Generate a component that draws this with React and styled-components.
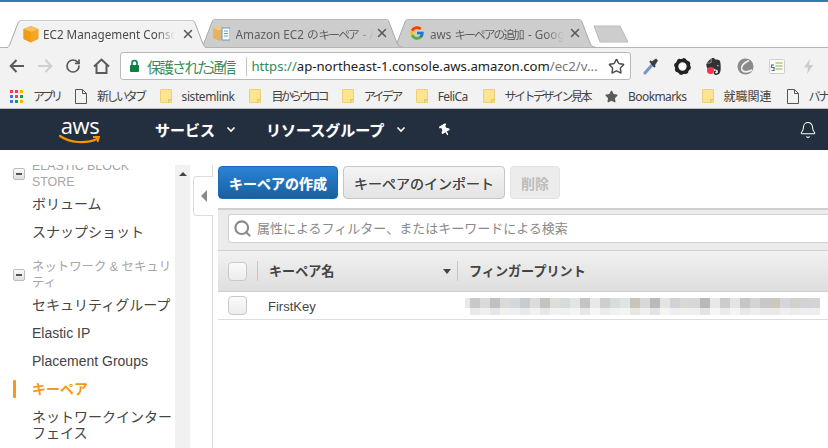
import React from 'react';
import styled, { createGlobalStyle } from 'styled-components';
import { Star, RotateCw, Search, Bell, X } from 'lucide-react';
import { FaThumbtack, FaStar } from 'react-icons/fa';
import { FcGoogle } from 'react-icons/fc';
import { SiEvernote } from 'react-icons/si';

const UI = '"Noto Sans", "Noto Sans CJK JP", sans-serif';
const CONSOLE = '"Liberation Sans", "Noto Sans CJK JP", sans-serif';

const Global = createGlobalStyle`
  html, body { margin: 0; padding: 0; background: #fff; }
  * { box-sizing: border-box; }
`;
const Page = styled.div`
  width: 828px; height: 448px; overflow: hidden; display: flex; flex-direction: column;
  font-family: ${UI}; background: #fff;
`;
const TabStrip = styled.div`
  height: 48px; flex: none; display: flex; align-items: flex-end; padding-left: 5px;
  border-top: 2px solid #2b7bb5; border-bottom: 1px solid #b4b4b4; background: #fff;
`;
const Tab = styled.div`
  position: relative; width: 203px; height: 28px; margin-left: -9.5px; margin-bottom: ${p => (p.$active ? '-1px' : '0')};
  flex: none; display: flex; align-items: center; z-index: ${p => p.$z};
  padding-left: ${p => p.$pad}px; font-size: 11.7px; white-space: nowrap;
  color: ${p => (p.$active ? '#4a4a4a' : '#5e5e5e')};
  &:first-child { margin-left: 0; }
`;
const TabShape = styled.svg`
  position: absolute; left: 0; top: 0; width: 100%; height: 100%; z-index: -1;
`;
const TabIcon = styled.svg` width: 18px; height: 18px; flex: none; `;
const FavWrap = styled.span` width: 16px; height: 16px; flex: none; display: flex; `;
const TabTitle = styled.span`
  position: relative; display: block; overflow: hidden; width: ${p => p.$w}px; margin-left: ${p => p.$gap}px;
  -webkit-mask-image: linear-gradient(to right, #000 86%, transparent 100%);
  mask-image: linear-gradient(to right, #000 86%, transparent 100%);
`;
const Kana = styled.span` letter-spacing: -1.9px; margin-right: 2px; `;
const TabClose = styled.span`
  position: absolute; left: 176px; top: 7px; width: 14px; height: 14px; color: #5a5a5a; display: flex;
`;
const NewTab = styled.svg` width: 36px; height: 18px; margin: 0 0 4px -2px; flex: none; `;

const Toolbar = styled.div`
  height: 36px; flex: none; background: #f2f2f2; display: flex; align-items: center; padding-left: 3px;
`;
const ToolBtn = styled.span`
  width: 28px; height: 28px; flex: none; display: flex; align-items: center; justify-content: center;
  color: ${p => p.$c || '#5a5a5a'};
`;
const Address = styled.div`
  width: 511px; height: 28px; margin: 0 4px 0 5px; flex: none; background: #fff; border: 1px solid #b9b9b9;
  border-radius: 3px; display: flex; align-items: center; padding-left: 8px; font-size: 14.5px; white-space: nowrap;
`;
const LockIcon = styled.svg` width: 11px; height: 14px; flex: none; `;
const Secure = styled.span` color: #3f8a5c; margin-left: 7px; letter-spacing: -2px; `;
const AddrSep = styled.span` width: 1px; height: 19px; background: #c4c4c4; margin: 0 5px 0 11px; flex: none; `;
const Scheme = styled.span` color: #2f8a5c; `;
const Host = styled.span` color: #222; `;
const Path = styled.span` color: #777; `;
const AddrUrl = styled.span` font-size: 13.15px; `;
const AddrStar = styled.span` margin-left: auto; margin-right: 4px; width: 18px; flex: none; display: flex; color: #4a4a4a; `;
const ExtIcon = styled.span`
  position: relative; width: 31.6px; height: 24px; flex: none; display: flex; align-items: center; justify-content: center;
`;
const RedDot = styled.span`
  position: absolute; left: 9px; top: 13px; width: 7px; height: 7px; border-radius: 50%; background: #ee3b4a;
`;

const Bookmarks = styled.div`
  height: 25px; flex: none; background: #f2f2f2; border-bottom: 1px solid #bcbcbc; display: flex; align-items: center;
  padding-left: 10px; font-size: 12px; color: #444; white-space: nowrap; overflow: hidden; gap: 15px;
`;
const Mark = styled.span` display: flex; align-items: center; gap: 10px; flex: none; `;
const MarkLabel = styled.span` letter-spacing: ${p => p.$ls || 0}px; `;

const Nav = styled.div`
  height: 41px; flex: none; background: #232f3e; display: flex; align-items: center; color: #fff; position: relative;
  font-family: ${CONSOLE};
`;
const Logo = styled.div`
  position: relative; width: 42px; height: 32px; margin-left: 59px; flex: none;
  display: flex; justify-content: center;
`;
const LogoWord = styled.span`
  font-family: "Open Sans", sans-serif; font-size: 22px; line-height: 22px; color: #fff; letter-spacing: -0.5px;
`;
const Smile = styled.svg` position: absolute; left: 0; bottom: 1px; width: 42px; height: 11px; `;
const NavMenu = styled.span`
  font-size: 15px; font-weight: 700; display: flex; align-items: center; margin-left: ${p => p.$ml}px; flex: none;
  text-shadow: 0 0 1px rgba(255,255,255,.4);
`;
const Chevron = styled.svg` width: 10px; height: 7px; margin-left: ${p => p.$ml}px; `;
const PinWrap = styled.span` margin-left: 33px; display: flex; transform: rotate(-30deg); `;
const BellWrap = styled.span` margin-left: auto; margin-right: 11px; display: flex; `;

const Main = styled.div` flex: 1; min-height: 0; display: flex; font-family: ${CONSOLE}; `;
const SideColumn = styled.div` width: 190px; flex: none; padding-top: 15px; display: flex; `;
const SideScroll = styled.div` flex: 1; min-width: 0; overflow: hidden; `;
const SideInner = styled.div` margin-top: -7px; width: 175px; `;
const Group = styled.div`
  display: flex; align-items: center; gap: 7px; padding-left: 13px; margin-top: ${p => p.$mt || 0}px;
  font-size: 12.4px; line-height: 16px; color: #a6a6a6; white-space: nowrap;
`;
const GroupLabel = styled.span` display: block; `;
const Toggle = styled.span`
  width: 12px; height: 12px; flex: none; border: 1px solid #bdbdbd; border-radius: 2px; background: linear-gradient(#fafafa,#dedede);
  display: flex; align-items: center; justify-content: center;
  &::before { content: ''; width: 6px; height: 2px; background: #555; }
`;
const Item = styled.div`
  position: relative; padding: 6px 0 6px 32px; font-size: 14px; line-height: 16px; white-space: nowrap;
  overflow: hidden; color: ${p => (p.$active ? '#f7981d' : '#444')}; font-weight: ${p => (p.$active ? 700 : 400)};
`;
const ActiveBar = styled.span`
  position: absolute; left: 13px; top: 5px; width: 3px; height: 18px; background: #f7981d; border-radius: 1px;
`;
const Scrollbar = styled.div`
  width: 15px; flex: none; background: #f1f1f1; display: flex; justify-content: center; padding-top: 7px;
  &::before { content: ''; width: 0; height: 0; border: 4px solid transparent; border-top: 0; border-bottom: 4px solid #444; }
`;
const Rail = styled.div`
  width: 23px; flex: none; margin-top: 15px; border-right: 1px solid #ddd; padding: 11px 0 0 3px;
`;
const RailHandle = styled.div`
  width: 20px; height: 40px; margin-right: -1px; background: #fff; border: 1px solid #ddd; border-right: 0;
  border-radius: 4px 0 0 4px; display: flex; align-items: center; justify-content: center;
  &::before { content: ''; width: 0; height: 0; border: 6px solid transparent; border-left: 0; border-right: 6px solid #8a8a8a; }
`;
const Content = styled.div` flex: 1; min-width: 0; padding: 16px 0 0 5px; overflow: hidden; `;
const Actions = styled.div` display: flex; gap: 5px; height: 33px; `;
const Button = styled.button`
  height: 33px; width: ${p => p.$w}px; padding: 0; font: 700 14px ${CONSOLE}; border-radius: 4px; cursor: pointer; flex: none;
  ${p => p.$primary && `color:#fff;background:linear-gradient(#2b83d6,#17609f);border:1px solid #1d6ab0;text-shadow:0 0 1px rgba(255,255,255,.5);`}
  ${p => p.$plain && `color:#444;background:linear-gradient(#f4f4f4,#e4e4e4);border:1px solid #c6c6c6;font-weight:400;text-shadow:0 0 .6px #444;`}
  ${p => p.$off && `color:#bdbdbd;background:#ececec;border:1px solid #e2e2e2;`}
`;
const FilterBand = styled.div`
  margin-top: 9px; height: 42px; background: #ebebeb; border-top: 2px solid #cfcfcf; padding: 4px 0 7px 10px;
`;
const FilterBox = styled.div`
  height: 29px; background: #fff; border: 1px solid #d2d2d2; border-right: 0; border-radius: 3px 0 0 3px;
  display: flex; align-items: center; padding-left: 4px; gap: 5px; font-size: 13px; color: #8a8a8a; white-space: nowrap;
`;
const FilterText = styled.span` margin-bottom: 2px; `;
const HeadRow = styled.div`
  height: 42px; display: flex; align-items: center; border-top: 1px solid #cfcfcf; border-bottom: 1px solid #cfcfcf;
  background: linear-gradient(#f1f1f1,#dedede); padding-left: 10px; font-size: 13.1px; font-weight: 700; color: #444;
`;
const HeadLabel = styled.span` margin-bottom: 2px; `;
const Check = styled.span`
  width: 19px; height: 19px; flex: none; background: linear-gradient(#fbfbfb,#ececec); border: 1px solid #c9c9c9; border-radius: 4px;
`;
const ColSep = styled.span` width: 1px; height: 20px; background: #c6c6c6; flex: none; margin: ${p => p.$m}; `;
const KeyHead = styled.span` width: 187px; flex: none; display: flex; align-items: center; justify-content: space-between; padding-right: 5px; `;
const SortCaret = styled.span`
  width: 0; height: 0; border: 4px solid transparent; border-bottom: 0; border-top: 5px solid #444;
`;
const DataRow = styled.div`
  height: 28px; display: flex; align-items: center; border-bottom: 1px solid #ddd; padding-left: 10px;
  font-size: 13px; color: #444;
`;
const KeyName = styled.span` width: 197px; margin-left: 21px; flex: none; padding-top: 1px; `;
const Mosaic = styled.svg` width: 360px; height: 22px; flex: none; filter: blur(.5px); `;

const mosaic = ['#c8c8c8','#dadada','#c0c0c0','#dcdad6','#d4d8da','#c8ccce','#dcdcdc','#c0c4c2','#e0dcd8','#d4dcda','#e4e4e4','#c4c4c6','#e8e8e8','#ccced0','#d8dcde','#e0e4e2','#c8c4bc','#d8d8da','#b8babc','#e4e4e0','#d0d4d8','#d8d8d6','#d4d8da','#b8b8b8','#e8e8e8','#cccccc','#e4e4e4','#c4c6c8','#d4d4d4','#c8c8cc','#ccc8c0','#d4d6dc','#d0d0cc','#d0d4d4','#d4d4d8'];

const TabBg = ({ active }) => (
  <TabShape viewBox="0 0 203 28" preserveAspectRatio="none">
    <path d="M0 28 C3 28 4 26 5 24 L13 3 C14 1 15 0 17 0 L186 0 C188 0 189 1 190 3 L198 24 C199 26 200 28 203 28"
      fill={active ? '#f2f2f2' : '#cdcdcd'} stroke="#a9a9a9" strokeWidth="1" />
  </TabShape>
);
const Cube = () => (
  <TabIcon viewBox="0 0 18 18">
    <path d="M9 1 L16.5 4 L16.5 14 L9 17.5 L1.5 14 L1.5 4 Z" fill="#f5a623" />
    <path d="M9 1 L16.5 4 L9 7 L1.5 4 Z" fill="#f9c05e" />
    <path d="M9 7 L9 17.5 L1.5 14 L1.5 4 Z" fill="#ef9d17" />
  </TabIcon>
);
const CubeDoc = () => (
  <TabIcon viewBox="0 0 18 18">
    <path d="M7 2 L13 4 L13 14 L7 17 L1 14 L1 4 Z" fill="#e4b45e" />
    <path d="M7 2 L13 4 L7 6.5 L1 4 Z" fill="#f0cc88" />
    <rect x="10" y="4" width="8" height="12" fill="#fff" stroke="#5a9bd0" />
    <path d="M12 7h4M12 9.5h4M12 12h4" stroke="#5a9bd0" />
  </TabIcon>
);
const Folder = () => (
  <svg width="12" height="14" viewBox="0 0 12 14">
    <path d="M.5 .5 H8 V.5 L11.5 .5 V13.5 H.5 Z" fill="#fde48f" stroke="#ecd07c" />
    <path d="M8.5 13.5 V10.5 H11.5" fill="#f5d065" stroke="#e8c45c" />
  </svg>
);
const Page2 = () => (
  <svg width="12" height="15" viewBox="0 0 12 15" fill="none" stroke="#555">
    <path d="M.5 .5 H7.5 L11.5 4.5 V14.5 H.5 Z M7.5 .5 V4.5 H11.5" />
  </svg>
);
const appColors = ['#e8453c','#e8453c','#f4b400','#3b78e7','#e8453c','#0f9d58','#3b78e7','#0f9d58','#f4b400'];
const Apps = () => (
  <svg width="13" height="13" viewBox="0 0 13 13">
    {appColors.map((c, i) => <rect key={i} x={(i % 3) * 5} y={Math.floor(i / 3) * 5} width="3" height="3" fill={c} />)}
  </svg>
);
const Chev = ({ ml }) => (
  <Chevron $ml={ml} viewBox="0 0 10 7"><path d="M1.5 1.5 L5 5 L8.5 1.5" fill="none" stroke="#fff" strokeWidth="1.6" /></Chevron>
);
const tabClose = <TabClose><X size={14} strokeWidth={2.6} /></TabClose>;

export default function App() {
  return (
    <Page>
      <Global />
      <TabStrip>
        <Tab $active $z={3} $pad={17}>
          <TabBg active /><Cube /><TabTitle $w={132} $gap={3}>EC2 Management Console</TabTitle>{tabClose}
        </Tab>
        <Tab $z={2} $pad={13}>
          <TabBg /><CubeDoc /><TabTitle $w={138} $gap={6}>Amazon EC2 の<Kana>キーペア</Kana> - Amazon</TabTitle>{tabClose}
        </Tab>
        <Tab $z={1} $pad={17}>
          <TabBg /><FavWrap><FcGoogle size={16} /></FavWrap><TabTitle $w={134} $gap={5}>aws <Kana>キーペアの追加</Kana> - Google 検索</TabTitle>{tabClose}
        </Tab>
        <NewTab viewBox="0 0 36 18"><path d="M1 1 H27 L35 17 H7 Z" fill="#cdcdcd" stroke="#bbb" /></NewTab>
      </TabStrip>

      <Toolbar>
        <ToolBtn>
          <svg width="16" height="14" viewBox="0 0 16 14" fill="none" stroke="#5a5a5a" strokeWidth="2"><path d="M15 7 H2 M7.5 1 L1.7 7 L7.5 13" /></svg>
        </ToolBtn>
        <ToolBtn>
          <svg width="16" height="14" viewBox="0 0 16 14" fill="none" stroke="#cfcfcf" strokeWidth="2"><path d="M1 7 H14 M8.5 1 L14.3 7 L8.5 13" /></svg>
        </ToolBtn>
        <ToolBtn><RotateCw size={16} strokeWidth={2.6} /></ToolBtn>
        <ToolBtn>
          <svg width="17" height="16" viewBox="0 0 17 16" fill="none" stroke="#5a5a5a" strokeWidth="2"><path d="M1 8.5 L8.5 1.5 L16 8.5 M3.5 7 V15 H13.5 V7" /></svg>
        </ToolBtn>
        <Address>
          <LockIcon viewBox="0 0 11 14"><path d="M3 6 V4 a2.5 2.5 0 0 1 5 0 V6" fill="none" stroke="#0b8043" strokeWidth="1.6" /><rect x="1" y="6" width="9" height="7" rx="1" fill="#0b8043" /></LockIcon>
          <Secure>保護された通信</Secure>
          <AddrSep />
          <AddrUrl><Scheme>https://</Scheme><Host>ap-northeast-1.console.aws.amazon.com</Host><Path>/ec2/v...</Path></AddrUrl>
          <AddrStar><Star size={17} strokeWidth={2} /></AddrStar>
        </Address>
        <ExtIcon>
          <svg width="16" height="18" viewBox="0 0 16 18"><path d="M2 16 L9 8" stroke="#7a93c8" strokeWidth="3" strokeLinecap="round" /><path d="M8 5 L13 1.5 L15 3.5 L11.5 9 Z" fill="#3a3f4a" /><path d="M7 4 L12 10" stroke="#3a3f4a" strokeWidth="2" /></svg>
        </ExtIcon>
        <ExtIcon>
          <svg width="17" height="17" viewBox="0 0 17 17" fill="none"><circle cx="8.5" cy="8.5" r="6" stroke="#222" strokeWidth="3.6" /><circle cx="8.5" cy="8.5" r="7.6" stroke="#222" strokeWidth="1.6" strokeDasharray="3 3" /><circle cx="8.5" cy="8.5" r="2.8" fill="#fff" /></svg>
        </ExtIcon>
        <ExtIcon><SiEvernote size={17} color="#2f3338" /><RedDot /></ExtIcon>
        <ExtIcon>
          <svg width="17" height="17" viewBox="0 0 17 17"><circle cx="8.5" cy="8.5" r="8" fill="#8b8b8b" /><path d="M12 2.5 C6 5 3.5 9 5 12 C7 15 11 14 15 12" fill="none" stroke="#f2f2f2" strokeWidth="1.7" /></svg>
        </ExtIcon>
        <ExtIcon>
          <svg width="16" height="15" viewBox="0 0 16 15"><rect x=".5" y=".5" width="15" height="14" rx="1" fill="#fbfbf0" stroke="#cfcfcf" /><path d="M6.5 4h7M6.5 7h7M6.5 10h7" stroke="#8bb04a" strokeWidth="1.2" /><path d="M5 6 H2.5 V8.5 H5 V11.5 H2.5" fill="none" stroke="#3a6ea5" strokeWidth="1.1" /></svg>
        </ExtIcon>
        <ExtIcon>
          <svg width="9" height="15" viewBox="0 0 9 15"><path d="M6 0 L0 8.5 H4 L3 15 L9 6 H5 Z" fill="#cbcbcb" /></svg>
        </ExtIcon>
      </Toolbar>

      <Bookmarks>
        <Mark><Apps /><MarkLabel $ls={-3}>アプリ</MarkLabel></Mark>
        <Mark><Page2 /><MarkLabel $ls={-2.5}>新しいタブ</MarkLabel></Mark>
        <Mark><Folder /><MarkLabel $ls={-0.4}>sistemlink</MarkLabel></Mark>
        <Mark><Folder /><MarkLabel $ls={-2.8}>目からウロコ</MarkLabel></Mark>
        <Mark><Folder /><MarkLabel $ls={-2.6}>アイデア</MarkLabel></Mark>
        <Mark><Folder /><MarkLabel $ls={-0.6}>FeliCa</MarkLabel></Mark>
        <Mark><Folder /><MarkLabel $ls={-2.5}>サイトデザイン見本</MarkLabel></Mark>
        <Mark><FaStar size={13} color="#5a5a5a" /><MarkLabel $ls={-0.6}>Bookmarks</MarkLabel></Mark>
        <Mark><Folder /><MarkLabel>就職関連</MarkLabel></Mark>
        <Mark><Page2 /><MarkLabel $ls={-2.3}>バナー</MarkLabel></Mark>
      </Bookmarks>

      <Nav>
        <Logo>
          <LogoWord>aws</LogoWord>
          <Smile viewBox="0 0 42 11"><path d="M1 2 C11 9 27 10 38 5" fill="none" stroke="#f79400" strokeWidth="2.2" strokeLinecap="round" /><path d="M34 3 L40 3 L38.5 8" fill="none" stroke="#f79400" strokeWidth="1.8" /></Smile>
        </Logo>
        <NavMenu $ml={54}>サービス<Chev ml={11} /></NavMenu>
        <NavMenu $ml={30}>リソースグループ<Chev ml={12} /></NavMenu>
        <PinWrap><FaThumbtack size={12} color="#fff" /></PinWrap>
        <BellWrap><Bell size={18} strokeWidth={1.4} color="#fff" /></BellWrap>
      </Nav>

      <Main>
        <SideColumn>
          <SideScroll>
            <SideInner>
              <Group><Toggle /><GroupLabel>ELASTIC BLOCK<br />STORE</GroupLabel></Group>
              <Item>ボリューム</Item>
              <Item>スナップショット</Item>
              <Group $mt={13}><Toggle /><GroupLabel>ネットワーク &amp; セキュリ<br />ティ</GroupLabel></Group>
              <Item>セキュリティグループ</Item>
              <Item>Elastic IP</Item>
              <Item>Placement Groups</Item>
              <Item $active><ActiveBar />キーペア</Item>
              <Item>ネットワークインター<br />フェイス</Item>
            </SideInner>
          </SideScroll>
          <Scrollbar />
        </SideColumn>
        <Rail><RailHandle /></Rail>
        <Content>
          <Actions>
            <Button $primary $w={120}>キーペアの作成</Button>
            <Button $plain $w={162}>キーペアのインポート</Button>
            <Button $off $w={50}>削除</Button>
          </Actions>
          <FilterBand>
            <FilterBox><Search size={19} strokeWidth={2.6} color="#8a8a8a" /><FilterText>属性によるフィルター、またはキーワードによる検索</FilterText></FilterBox>
          </FilterBand>
          <HeadRow>
            <Check />
            <ColSep $m="0 11px 0 10px" />
            <KeyHead><HeadLabel>キーペア名</HeadLabel><SortCaret /></KeyHead>
            <ColSep $m="0 11px 0 1px" />
            <HeadLabel>フィンガープリント</HeadLabel>
          </HeadRow>
          <DataRow>
            <Check />
            <KeyName>FirstKey</KeyName>
            <Mosaic viewBox="0 0 360 22">
              <rect x="0" y="3" width="5" height="10" fill="#e8e8e8" />
              {mosaic.map((c, i) => (
                <g key={i}>
                  <rect x={5 + i * 10} y="3" width="10" height="10" fill={c} />
                  <rect x={5 + i * 10} y="13" width="10" height="7" fill={c} opacity=".4" />
                </g>
              ))}
            </Mosaic>
          </DataRow>
        </Content>
      </Main>
    </Page>
  );
}
